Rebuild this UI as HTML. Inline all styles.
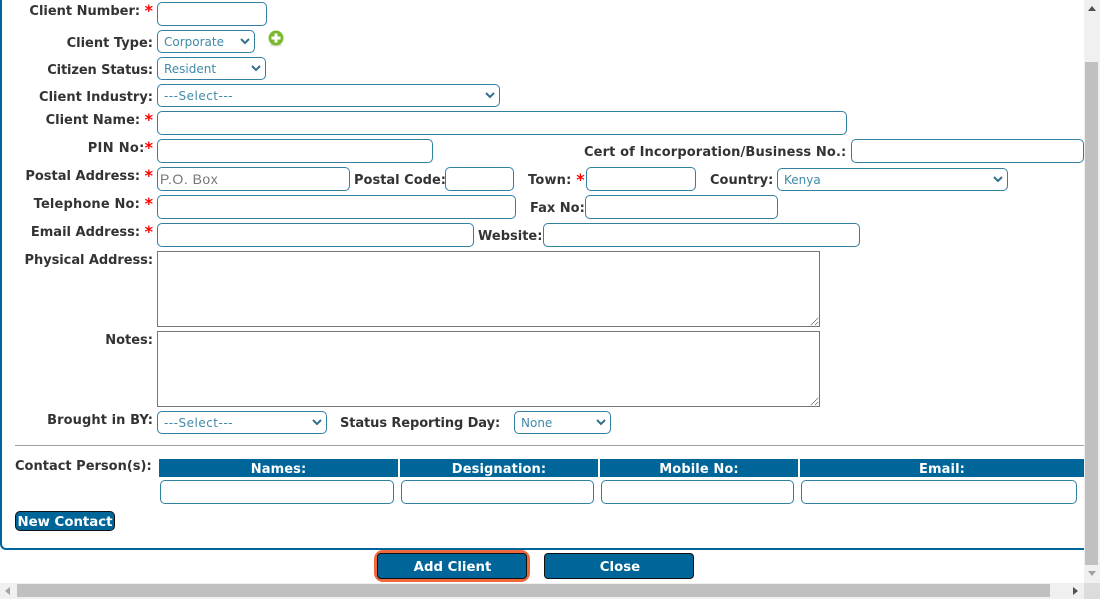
<!DOCTYPE html>
<html><head><meta charset="utf-8">
<style>
html,body{margin:0;padding:0;width:1100px;height:599px;overflow:hidden;background:#fff}
body{position:relative;font-family:"DejaVu Sans","Liberation Sans",sans-serif}
.a,.l,.i,.s,.t,.h,.b{position:absolute;box-sizing:border-box}
.l{font-weight:bold;font-size:13px;line-height:16px;height:16px;color:#333;white-space:nowrap;margin-top:2px}
.l.r{text-align:right;left:0;width:153px}
.l i{font-style:normal;color:#f00;font-size:16px;line-height:0;position:relative;top:1px;letter-spacing:0}
.i{border:1px solid #337f9f;border-radius:5px;background:#fff}
.s{border:1px solid #337f9f;border-radius:5px;background:#fff;height:23px;font-size:12px;line-height:23px;color:#3f8aa8;padding-left:6px;white-space:nowrap}
.s svg{position:absolute;right:4px;top:7px}
.s.q{letter-spacing:.5px}
.t{border:1px solid #767676;background:#fff;left:157px;width:663px;height:76px}
.t svg{position:absolute;right:0;bottom:0}
.h{top:459px;height:18px;background:#006699;color:#fff;font-weight:bold;font-size:13px;letter-spacing:.1px;line-height:19px;padding-top:1px;text-align:center}
.b{background:#006699;color:#fff;font-weight:bold;font-size:13.3px;text-align:center;border:1px solid #111;border-radius:4px}
</style></head><body>

<div class="a" style="left:0;top:-20px;width:1084px;height:570px;border-left:2px solid #006699;border-bottom:2px solid #006699;border-bottom-left-radius:6px"></div>

<div class="l r" style="top:2px">Client Number: <i>*</i></div>
<div class="i" style="left:157px;top:2px;width:110px;height:24px"></div>

<div class="l r" style="top:34px">Client Type:</div>
<div class="s" style="left:157px;top:30px;width:98px">Corporate<svg width="10" height="7" viewBox="0 0 10 7"><path d="M1 1l4 4 4-4" fill="none" stroke="#33708f" stroke-width="2"/></svg></div>
<svg class="a" style="left:268px;top:30px" width="16" height="17" viewBox="0 0 16 17"><ellipse cx="8" cy="15" rx="6" ry="1.5" fill="#ddd"/><circle cx="8" cy="8" r="7.5" fill="#7cb82f"/><path d="M3.5 8h9M8 3.5v9" stroke="#fff" stroke-width="3"/></svg>

<div class="l r" style="top:61px;letter-spacing:-.12px">Citizen Status:</div>
<div class="s" style="left:157px;top:57px;width:109px">Resident<svg width="10" height="7" viewBox="0 0 10 7"><path d="M1 1l4 4 4-4" fill="none" stroke="#33708f" stroke-width="2"/></svg></div>

<div class="l r" style="top:88px">Client Industry:</div>
<div class="s q" style="left:157px;top:84px;width:343px">---Select---<svg width="10" height="7" viewBox="0 0 10 7"><path d="M1 1l4 4 4-4" fill="none" stroke="#33708f" stroke-width="2"/></svg></div>

<div class="l r" style="top:111px">Client Name: <i>*</i></div>
<div class="i" style="left:157px;top:111px;width:690px;height:24px"></div>

<div class="l r" style="top:139px;letter-spacing:.3px">PIN No:<i>*</i></div>
<div class="i" style="left:157px;top:139px;width:276px;height:24px"></div>
<div class="l" style="left:584px;top:143px;letter-spacing:.12px">Cert of Incorporation/Business No.:</div>
<div class="i" style="left:851px;top:139px;width:233px;height:24px"></div>

<div class="l r" style="top:167px">Postal Address: <i>*</i></div>
<div class="i" style="left:157px;top:167px;width:193px;height:24px;font-size:14px;line-height:23px;color:#757575;padding-left:2px;font-family:'Liberation Sans',sans-serif;letter-spacing:.5px">P.O. Box</div>
<div class="l" style="left:354px;top:171px">Postal Code:</div>
<div class="i" style="left:445px;top:167px;width:69px;height:24px"></div>
<div class="l" style="left:528px;top:171px;letter-spacing:.2px">Town: <i>*</i></div>
<div class="i" style="left:586px;top:167px;width:110px;height:24px"></div>
<div class="l" style="left:710px;top:171px">Country:</div>
<div class="s" style="left:777px;top:168px;width:231px">Kenya<svg width="10" height="7" viewBox="0 0 10 7"><path d="M1 1l4 4 4-4" fill="none" stroke="#33708f" stroke-width="2"/></svg></div>

<div class="l r" style="top:195px;letter-spacing:.15px">Telephone No: <i>*</i></div>
<div class="i" style="left:157px;top:195px;width:359px;height:24px"></div>
<div class="l" style="left:530px;top:199px">Fax No:</div>
<div class="i" style="left:585px;top:195px;width:193px;height:24px"></div>

<div class="l r" style="top:223px">Email Address: <i>*</i></div>
<div class="i" style="left:157px;top:223px;width:317px;height:24px"></div>
<div class="l" style="left:478px;top:227px">Website:</div>
<div class="i" style="left:543px;top:223px;width:317px;height:24px"></div>

<div class="l r" style="top:251px;letter-spacing:-.06px">Physical Address:</div>
<div class="t" style="top:251px"><svg width="9" height="9" viewBox="0 0 9 9"><path d="M1 8l7-7M5 8l3-3" stroke="#666" stroke-width="1" fill="none" stroke-dasharray="1 .5"/></svg></div>
<div class="l r" style="top:331px">Notes:</div>
<div class="t" style="top:331px"><svg width="9" height="9" viewBox="0 0 9 9"><path d="M1 8l7-7M5 8l3-3" stroke="#666" stroke-width="1" fill="none" stroke-dasharray="1 .5"/></svg></div>

<div class="l r" style="top:411px;letter-spacing:.08px">Brought in BY:</div>
<div class="s q" style="left:157px;top:411px;width:170px">---Select---<svg width="10" height="7" viewBox="0 0 10 7"><path d="M1 1l4 4 4-4" fill="none" stroke="#33708f" stroke-width="2"/></svg></div>
<div class="l" style="left:340px;top:414px;letter-spacing:-.1px">Status Reporting Day:</div>
<div class="s" style="left:514px;top:411px;width:97px">None<svg width="10" height="7" viewBox="0 0 10 7"><path d="M1 1l4 4 4-4" fill="none" stroke="#33708f" stroke-width="2"/></svg></div>

<div class="a" style="left:15px;top:445px;width:1069px;height:1px;background:#a0a0a0"></div>

<div class="l" style="left:15px;top:457px">Contact Person(s):</div>
<div class="h" style="left:159px;width:239px">Names:</div>
<div class="h" style="left:400px;width:198px">Designation:</div>
<div class="h" style="left:600px;width:198px">Mobile No:</div>
<div class="h" style="left:800px;width:284px">Email:</div>
<div class="i" style="left:160px;top:480px;width:234px;height:24px"></div>
<div class="i" style="left:401px;top:480px;width:193px;height:24px"></div>
<div class="i" style="left:601px;top:480px;width:193px;height:24px"></div>
<div class="i" style="left:801px;top:480px;width:276px;height:24px"></div>

<div class="b" style="left:15px;top:511px;width:100px;height:20px;line-height:19px;padding-top:1px;border-radius:5px">New Contact</div>

<div class="a" style="left:374px;top:550px;width:156px;height:32px;border:3px solid #f0693c;border-radius:9px"></div>
<div class="b" style="left:377px;top:553px;width:150px;height:26px;line-height:27px;padding-left:1px">Add Client</div>
<div class="b" style="left:544px;top:553px;width:150px;height:26px;line-height:27px;padding-left:2px">Close</div>

<!-- scrollbars -->
<div class="a" style="left:1084px;top:0;width:16px;height:583px;background:#f0f0f0"></div>
<div class="a" style="left:1085px;top:62px;width:13px;height:503px;background:#c0c0c0"></div>
<svg class="a" style="left:1088px;top:6px" width="8" height="6" viewBox="0 0 8 6"><path d="M4 0l4 5H0z" fill="#505050"/></svg>
<svg class="a" style="left:1088px;top:571px" width="8" height="6" viewBox="0 0 8 6"><path d="M0 0h8L4 5z" fill="#a3a3a3"/></svg>
<div class="a" style="left:0;top:583px;width:1084px;height:16px;background:#f0f0f0"></div>
<div class="a" style="left:17px;top:584px;width:1033px;height:13px;background:#c0c0c0"></div>
<svg class="a" style="left:5px;top:587px" width="6" height="8" viewBox="0 0 6 8"><path d="M5 0v8L0 4z" fill="#a3a3a3"/></svg>
<svg class="a" style="left:1073px;top:587px" width="6" height="8" viewBox="0 0 6 8"><path d="M0 0v8l5-4z" fill="#505050"/></svg>
<div class="a" style="left:1084px;top:583px;width:16px;height:16px;background:#dcdcdc"></div>
</body></html>
